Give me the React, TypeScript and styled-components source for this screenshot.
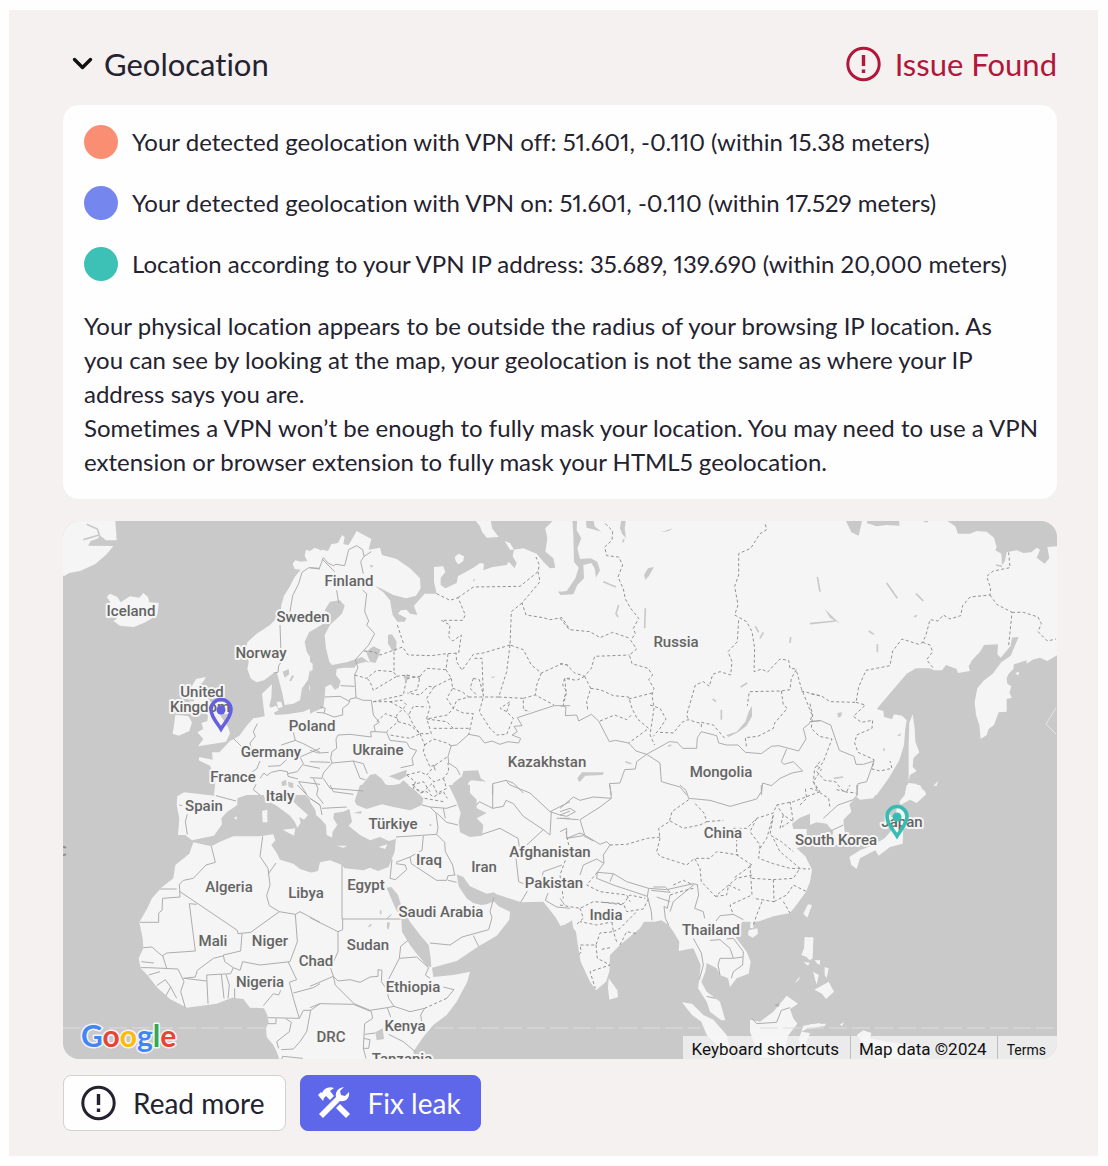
import React, { useState } from "react";
import styled, { createGlobalStyle } from "styled-components";

const GlobalStyle = createGlobalStyle`
  *, *::before, *::after { box-sizing: border-box; }
  body {
    margin: 0;
    background: #fefefe;
    color: #24222f;
    font-family: Lato, "Noto Sans", sans-serif;
    font-variant-ligatures: none;
    font-variant-numeric: proportional-nums;
  }
  h2, p, ul { margin: 0; padding: 0; font-weight: 400; }
`;

const Page = styled.main`
  padding: 10px 10px 10px 9px;
`;

const Panel = styled.section`
  display: flex;
  flex-direction: column;
  padding: 34px 41px 25px 54px;
  background: #f4f1f0;
`;

const Header = styled.header`
  display: flex;
  align-items: center;
  justify-content: space-between;
  margin-bottom: 21px;
`;

const Title = styled.h2`
  display: flex;
`;

const Disclosure = styled.button`
  display: flex;
  align-items: center;
  gap: 11px;
  padding: 0 0 0 9px;
  border: 0;
  background: none;
  color: inherit;
  font: inherit;
  font-size: 31px;
  line-height: 40px;
  cursor: pointer;
`;

const Status = styled.div`
  display: flex;
  align-items: center;
  gap: 14px;
  color: #b3163b;
  font-size: 31px;
  line-height: 40px;
`;

const Card = styled.div`
  padding: 20px 16px 20px 21px;
  border-radius: 16px;
  background: #fefefe;
  font-size: 24px;
  line-height: 34px;
`;

const Legend = styled.ul`
  display: grid;
  gap: 27px;
  margin-bottom: 28px;
  list-style: none;
`;

const LegendItem = styled.li`
  display: flex;
  align-items: center;
  gap: 14px;
`;

const Dot = styled.span<{ $color: string }>`
  flex: none;
  width: 34px;
  height: 34px;
  border-radius: 50%;
  background: ${(p) => p.$color};
`;

const MapFrame = styled.div`
  position: relative;
  margin: 22px 0 16px;
  overflow: hidden;
  border-radius: 16px;
  background: #c9c9c9;
`;

const MapDrawing = styled.svg`
  display: block;
  width: 100%;
  height: auto;
`;

const MapLabel = styled.text`
  font-family: Roboto, sans-serif;
  font-size: 15px;
  font-weight: 500;
  fill: #646464;
  stroke: #f5f5f5;
  stroke-width: 4px;
  stroke-linejoin: round;
  paint-order: stroke;
  text-anchor: middle;
`;

const Wordmark = styled.text`
  font-family: Lato, sans-serif;
  font-size: 30px;
  font-weight: 700;
  stroke: #f5f5f5;
  stroke-width: 3px;
  stroke-linejoin: round;
  paint-order: stroke;
`;

const Attribution = styled.div`
  position: absolute;
  right: 0;
  bottom: 0;
  display: flex;
  height: 23px;
  background: rgba(245, 245, 245, 0.75);
  font-family: Roboto, sans-serif;
  color: #111;
`;

const ShortcutsButton = styled.button`
  padding: 0 11px 0 9px;
  border: 0;
  background: none;
  color: inherit;
  font: inherit;
  font-size: 17px;
  line-height: 26px;
  cursor: pointer;
`;

const MapData = styled.span`
  padding: 0 10px 0 8px;
  border-left: 1px solid #bdbdbd;
  font-size: 17px;
  line-height: 26px;
`;

const Terms = styled.a`
  padding: 0 11px 0 9px;
  border-left: 1px solid #bdbdbd;
  color: inherit;
  font-size: 14px;
  line-height: 28px;
  text-decoration: none;
`;

const Actions = styled.div`
  display: flex;
  flex-wrap: wrap;
  gap: 14px;
`;

const Action = styled.button<{ $primary?: boolean }>`
  display: flex;
  align-items: center;
  gap: 17px;
  height: 56px;
  padding: 0 ${(p) => (p.$primary ? 19 : 20)}px 0 ${(p) => (p.$primary ? 16 : 17)}px;
  border: 1px solid ${(p) => (p.$primary ? "#5e67e9" : "#d3d1d0")};
  border-radius: 8px;
  background: ${(p) => (p.$primary ? "#5e67e9" : "#fefefe")};
  color: ${(p) => (p.$primary ? "#fefefe" : "#24222f")};
  font: inherit;
  font-size: 28px;
  cursor: pointer;
`;

type Tile = { x: number; y: number; land?: string; water?: string; creek?: string; solid?: string; dashed?: string };

/* Each tile is drawn in thirds of a map unit and overlaps its neighbours slightly. */
const tiles: Tile[] = [
  {
    x: 60, y: 515,
    land: `M0 0H165L170 76H138L118 60 115 70 92 78 84 92 160 93 140 118 105 148 60 168 28 174 14 182 0 182Z
      M150 236L172 246 182 262 210 244 238 248 250 234 264 246 268 262 296 264 292 300 256 322 222 336 180 332 160 318 172 310 138 304V266L152 262 140 246Z
      M780 104L764 98 750 108 738 104 734 122 742 138 722 140 706 136 698 146 704 162 722 164 704 186 690 214 672 242 664 270 662 298 630 330 590 356 562 382 556 410 566 440 562 462 572 490 590 502 612 496 636 478 650 470 658 500 666 530 674 570 700 566 720 556 726 520 744 494 750 462 760 440 740 410 734 380 748 350 780 330Z
      M614 604L606 536 636 508 634 548 628 572 646 600 680 598 730 590 748 582 780 600V840H462L466 800 458 770 450 752 416 736 418 726 458 734 456 712 478 712 510 678 538 662 560 632 580 610Z
      M628 580l20-8 8 14-16 8ZM650 560h14l4 16-14 4ZM748 512l12-4-2 14-10 4Z
      M408 492L438 486 430 500 412 514 440 516 434 540 460 570 480 600 504 636 510 655 498 680 462 686 414 694 430 672 412 652 430 642 424 624 442 618 444 600 420 586 400 570 384 556 392 520Z
      M346 600L384 602 396 622 388 648 356 662 338 656 342 630Z`,
    water: `M668 470l18-8 2 16-14 10ZM688 498l8-18 6 4-8 14ZM664 800l14-6 2 16-14 4ZM684 800l16 4v16l-14-4Z`,
    creek: `M80 28L112 42 118 60 70 74M380 556h22M374 600h20`,
    solid: `M780 162L746 158 726 172 716 206 698 242 690 290M660 330L664 440 656 452 654 472 640 474M592 626L580 650 586 664 570 684 574 702M520 670L530 680 544 694M700 652L706 676 664 690M706 676L730 686 780 712M600 738L590 762 577 770M600 790L612 774 620 782 634 772 660 766 682 770 684 784 714 792M624 754L660 752 680 734M684 776L712 770 730 746 720 726 780 700M730 750L780 760M716 800L780 808M716 800L740 838M588 808L580 824 600 840`,
  },
  {
    x: 310, y: 515,
    land: `M0 108L20 112 36 104 54 108 64 88 84 84 96 60 104 66 100 88 116 90 140 48 184 72 176 104 210 98 216 120 260 132 300 160 330 190 332 220 318 242 288 250 250 240 212 220 196 214 220 232 240 256 248 300 262 320 284 320 290 310 264 296 272 286 290 284 300 296 322 300 312 272 344 236 380 236 372 200V156L400 154 406 172 392 188V210L406 220 440 204 444 184 490 158 510 144 522 146 520 166 548 156 590 150 596 140 614 160 620 144 608 124 612 104 640 100 680 116 700 140 720 160 736 158 730 130 706 110 712 70 706 40 728 18V0H780V840H0Z
      M484 0H540L546 40 566 66 530 68 516 50 510 34Z M584 78L600 84 612 104 600 104Z M434 126L446 116 462 124 460 138 446 148 438 140Z`,
    water: `M0 350L44 324 60 300 44 286 60 260 90 256 104 272 96 296 60 330 44 360 48 400 58 440 66 450 110 442 156 426 180 444 168 440 140 448 134 458 100 458 80 462 78 480 92 498 86 518 74 524 62 508 46 516 44 546 40 578 12 590 0 596V470L8 464 8 446 0 440Z
      M168 410L190 394 212 404 206 424 196 444 180 440Z M234 360L246 358 260 380 258 408 248 408 234 386Z
      M150 840L156 810 180 780 196 776 216 792 226 808 240 812 270 806 280 796 300 812V840Z M236 784L290 764 288 784 268 796Z
      M416 840L430 804 456 784 460 768 504 766 512 790 528 800 484 796 474 804 480 840Z M744 230L780 222V240L752 240Z M178 150l14 2-8 6ZM488 196l8-6-4 10ZM542 486l14-2-6 6ZM280 482l14-4 4 14-12 6Z`,
    solid: `M0 158L28 160 40 128 54 144 70 152 78 148 104 152 116 104 140 92 158 104 162 124 152 140 160 176M162 124L184 110M36 132L74 170M158 226L170 236 164 290 176 318 170 330 194 356 176 390 136 434M80 226L86 264M136 434L144 458 134 480 138 548 120 552 116 566 98 580V600L72 606 42 594 20 592M92 512L134 514M44 546L90 544 120 560M30 576L46 580 42 594M138 548L160 556 184 556 190 600 208 622 192 632 196 650 182 650 184 666 120 658 84 660 78 672 80 700 66 710 62 730 66 744 130 738 160 746 172 776M196 650L230 652 240 676 290 682 300 700 320 706 306 730 310 750 272 758M0 706L26 714 56 712M0 740L60 742M66 744L40 774 36 790 0 788M40 790L60 820 160 828M130 738L150 790 166 794M10 790L24 820 20 840M450 780L440 760 416 744 414 724 424 692 440 690 476 658 508 664 524 684 546 678 570 688 594 680 626 684 632 670 606 660 622 650 612 634 636 632 622 608 732 572 780 572M548 840V806L588 796 610 804 640 834 M590 800L600 810`,
    dashed: `M380 236L420 256 444 248 466 300 458 316 394 316 420 330 416 366 428 378 454 360 446 414 410 416 364 422 294 420 278 396 210 420 190 410 160 408M444 248L490 216 630 214 684 170 688 150 678 126M684 170L690 200 636 264 648 300 700 308 720 314 756 308 780 344M636 264L604 290 600 390 640 404 664 450 694 474 756 446 780 452M600 390L520 414 490 418 456 466 440 440 438 414M694 474L680 510 676 540 732 570M600 390L590 470 566 546 520 546 516 430 490 430M262 330L282 390M252 410V468M134 480L170 490 200 466 250 470 260 484 190 526 180 500 168 486M190 560L280 540 290 490 330 484 322 524 292 534M330 484L350 460 408 464 414 416M408 464L424 490 372 516 356 514 330 540 292 534M260 484L290 480 330 490M372 516L350 550 360 576 350 610 364 656 330 656 310 630 296 600 310 574 350 576M424 490L428 520 410 550 430 580 412 600 350 612M428 520L456 530 476 546 440 556 430 580 460 594 490 596 476 660M476 546L520 546 508 590 540 640 560 660 590 658 610 610 590 590 600 560 570 580 590 590M566 546L640 550 640 584 660 590M640 550L676 540M430 640L410 620 350 612M476 640L430 640 364 640M190 560L240 560 276 556 290 570 260 600 264 620 230 650M200 620L226 596 264 610M240 560L276 580 296 600M264 620L300 630 330 656 300 670 240 660M330 656L344 690 340 710 360 756 372 750 376 770M344 690L370 672 410 684 424 692M376 750L414 724M376 750L350 780 372 800 400 790 416 770 414 744M290 780L330 770 350 780M290 780L316 800 310 820 340 830 372 800M400 790L410 820 380 836M306 810L340 800 360 830M490 490L508 494 520 540M490 490L480 520 500 540M780 490L764 490 768 530 760 560`,
  },
  {
    x: 560, y: 515,
    land: `M0 0H780V840H0Z`,
    water: `M36 0H52L50 46 64 70 52 100 60 132 92 130 112 140 120 166 108 188 104 160 94 144 70 150 72 190 52 210 40 238 0 240V230L20 228 46 190 56 158 42 140 40 60Z M76 0H98L104 34 124 50 96 42 80 38ZM186 0H200L194 40 198 70 186 56 180 40Z M302 52L338 40 326 48ZM252 180L264 160 282 156 266 184 256 194Z M498 660L530 650 556 620 566 590 576 572V604L560 632 534 652 506 666Z M52 790L66 772 132 772 128 780 76 782 58 802Z`,
    creek: `M256 280L254 340M176 270L168 296 174 306M130 200L168 216M484 584V614M692 366L690 384M750 328L780 320M774 190L780 230M586 334L596 352M600 370L610 352M458 552l10 8M542 516L562 504M196 740L214 746M188 82l4-10M324 694l10-4`,
    solid: `M0 572L18 576 16 602 50 600 56 618 94 598 116 618 148 680 166 676 206 684 228 708 260 718 328 680 352 682 368 700 410 700 412 668 424 650 470 662 476 684 500 690 534 690 556 712 604 716 634 694 656 692 716 708 738 672 730 640 748 626 750 620 780 618M680 702L664 740 672 748 700 740 728 768 696 774 660 790 634 812 608 804 604 840M260 718L300 744 304 800 360 816 380 840M260 718L230 740 226 762 194 764 180 804 148 806 154 840`,
    dashed: `M136 26L158 48 156 76 134 96 140 122 176 126 188 150 174 186 190 222 196 252 212 280 236 310 220 340 226 356 212 376 230 402 208 420 216 446 264 460 278 480 266 494 282 520 276 540 282 580 270 660 284 690M0 310L28 344 90 350 120 368 158 352 210 370M0 446L20 450 44 474 74 484 94 460 104 424 208 420M74 484L50 496 14 490 8 510 20 530 10 570M74 484L92 520 80 560 84 590M92 520L120 524 160 542 206 546 216 580 232 612 266 640 206 684M206 552L276 534M120 618L164 600 200 614 216 598M270 570L300 580 318 612 300 640 280 664M300 652L340 654 366 622 384 614 424 626V640M384 610L380 600 406 510 430 500 448 514 458 478 480 470 512 480 516 440 504 410 532 380 536 314M616 28L620 44 600 56 572 100 536 116V180L524 214 534 270 524 300 560 320 576 350 584 400 582 470 606 462 622 472 660 432 686 436 690 460 710 462 694 490 690 524 664 528 568 530 562 572M664 528L670 570 682 580 644 624 640 640 594 664 556 668 560 700M424 622L460 630 496 672M710 470L724 520 740 560 756 600 750 620M724 528L780 542M780 740L764 760 760 800 780 830`,
  },
  {
    x: 810, y: 515,
    land: `M0 0H412V18L436 34 444 56 480 56 500 48 530 50 552 68 560 96 556 106 574 116 576 150 584 140 590 112 620 106 640 114 664 112 680 98 690 104 680 128 704 146 718 130 712 96 760 92V410L712 438 690 428 668 434 650 446V436L612 448 610 462 596 476 590 490 592 506 604 514 598 534 606 548 590 552V590L566 592 552 630 536 642 530 660 512 672 508 630 498 600 494 560 502 520 520 498 548 476 574 442 602 422 626 366 606 368 602 392 572 428 562 418 564 388 522 390 510 410 486 436 476 454 480 468 444 474 440 462 408 450 396 466H372L358 460H318L290 476 200 582 220 588 222 606 246 612 252 598 276 602 290 616 286 640 282 690 268 736 236 790 200 840H0Z
      M308 598L314 640 316 680 328 712 310 730 308 756 320 768 300 780 296 800V690L298 624Z M290 840L294 804 318 806 346 830 348 840Z M370 812L384 798 380 812ZM616 474l12-4-4 12Z`,
    water: `M108 0H156L156 18 146 62 124 52 108 18Z M170 24L180 0H268V32L230 30 200 34ZM342 14h12v8h-12Z M44 282L90 326 60 308ZM310 304l12-6-4 10ZM82 594l14-2-2 12-10 4ZM260 664l12-10v8Z M230 578l10 2-4 12Z`,
    creek: `M22 186L30 230M0 326L76 318M230 204L262 250M318 236L340 258M176 348L192 358M202 388V412M72 790L100 786M222 700v8M558 150l18 4`,
    solid: `M0 620L30 616 62 630 88 706 132 724 138 748H160L192 738 170 800 144 806 140 840`,
    dashed: `M596 112L600 158 550 168 530 184 542 220 540 240 480 246 458 272 452 302 420 312 400 300 384 318 360 314 348 360 338 382 326 388 276 372 248 408 240 452 168 466 146 516 138 562 60 560 36 544 0 536M540 240L560 268 606 292 596 392M606 292L640 292 684 306 694 326 684 350 712 378 738 372M338 382L360 390 368 410 350 434 370 460M138 562L166 570 130 604 154 622 188 616 186 640 140 660 134 684 144 712 192 734 186 762 210 768 246 760 240 738M0 566L8 600 4 640 28 664 66 672 40 740 20 770 44 796 76 800 100 830 138 834M20 750L34 764 10 800 24 830`,
  },
  {
    x: 60, y: 785,
    land: `M400 172L420 176 454 184 480 170 520 154H600L640 148 646 166 634 180 650 204 660 224 700 236 720 252 764 266 780 262V840H664L650 800 640 780 620 756 618 730 626 712 622 690 612 670 570 668 550 642 516 638 470 656 380 668 330 642 290 606 262 570 242 550 236 520 250 490 248 460 238 412 262 370 276 340 304 308 340 280 346 240 388 206Z
      M352 34L372 22 464 32 470 0H596L612 18 560 30 532 40V60L500 82 484 100 486 118 462 152 424 160 396 166 376 150H354L358 100 350 60Z
      M590 0H660L668 16 706 56 744 90 732 104 718 96 722 114 712 128 704 110 690 92 650 62 616 44 606 16Z M668 134L706 130 702 152ZM606 78L622 74V112H608ZM522 98l8-4v12ZM668 0H780V100L768 90 766 60 730 24 700 0Z`,
    creek: `M300 312H350`,
    solid: `M454 184L466 232 438 240 400 280 370 286 358 298 360 336 308 340 306 376 296 384V412H240M360 320L532 436 534 446 572 442 658 380 628 362 620 332 630 300 624 250 600 214 608 154M624 268L648 234M410 358L388 356 406 498 320 504 308 512 320 550M546 446L542 498 490 510 494 530 520 548 512 566 440 570 444 656M492 512L460 520 412 556 406 576 370 580M250 488L276 486 296 504 310 514M242 548L266 548 354 552 372 590 362 620 376 668M244 530L282 534M266 570L300 560M290 602L316 584 332 606 318 632M332 606L350 640M484 568L492 640M498 568L508 600 504 640M524 640V610M520 548L540 556 548 530 600 540 690 530 712 470 706 388 658 380M706 388L720 380 780 412M684 530L710 584 688 592 700 640 718 700 624 698M610 662L640 626 656 630 662 616M700 624L760 608 780 596M718 700L730 676H752L740 740 720 770 700 792 664 794M752 676L780 656M676 700L694 712 688 740 650 770 656 790M624 716H648V700M372 580L440 588M664 826L668 814 728 820M468 32L528 48M382 88L376 110 382 148M358 60L366 62M712 0L750 40 780 60`,
  },
  {
    x: 310, y: 785,
    land: `M0 264L24 258 30 232 60 226 96 240 104 250 160 256 180 248 204 258 236 246 254 200 258 162 236 168 210 156 180 166 150 150 116 122 126 110 118 72 100 80 72 84 70 100 82 120 68 140 66 158 50 150 48 120 30 100 14 72 0 50V0H780V410L752 424 736 396 700 350 634 352 560 328 550 348 566 364 600 380 598 404 560 452 506 484 440 528 366 548 370 576 430 570 480 560 472 590 440 650 410 690 370 720 340 756 330 770 310 800 316 840H0Z M206 186L232 178 226 192ZM80 182H112L100 188Z`,
    water: `M150 0H294L320 20 340 40 336 60 300 76 250 66 216 58 170 72 140 60 134 48Z M416 0H480L480 24 500 44V70L530 84 500 100 520 120 516 152 480 156 450 142 446 110 452 84 440 50Z
      M230 308L244 306 264 330 276 370 300 410 330 450 356 480 362 520 364 546 352 544 320 506 300 480 276 440 274 400 256 370Z M440 268L460 276 480 304 530 326 552 322 562 330 550 350 530 358 514 360 490 354 470 340 446 304Z M196 742L218 730 222 762 200 766ZM130 84l24-6v8ZM232 410l8 4-4 20-6-6Z`,
    creek: `M176 426L184 418M212 388V376M358 118l6 4`,
    solid: `M96 240V402H230L244 388M230 402H272M98 402V434L84 440V500L62 550 70 574 84 588 120 584 150 592 180 576 204 574V554L216 556 214 590 230 612 236 640 252 664 232 668 180 676 132 656 76 600 70 574 0 604M0 398L84 440M0 668L30 656 130 658 184 680 188 700 164 716 160 790 168 820M164 748L196 744M160 760L180 764 176 790 160 790M236 748L280 770 316 800M232 668L242 696M252 664L300 680 344 670 332 690 336 716 344 726M294 466L272 484 268 520 232 590M268 520L320 516 356 548 346 570 360 580M400 606L432 614 410 640M258 156L380 148 384 128 378 84 360 66 336 60M340 152L336 196 300 216 258 232M404 172L406 200 428 240 434 270M380 148L404 172M300 216L304 236 380 286 410 286 414 272 436 270M246 224L240 280 256 284 290 254 286 240 258 236M360 474L420 480 456 456 536 434 546 398 540 380 552 336M490 452L506 484M414 286L440 292M516 148L570 130 624 160 630 196M618 220L626 290 640 296M632 352L652 318M548 0V70L508 50 500 60M548 70L580 64 588 46 610 56 640 94 700 134 720 150M700 134L650 180M600 0L660 24 720 80 780 50M720 150L724 80M720 80L750 90 780 78M740 100H780M380 84L410 112 444 120M360 66L410 70 440 60M400 70L406 100M700 260L756 240M700 260L696 276M714 324L706 346 740 366 780 370M0 40L30 60 36 90M36 70L110 66M60 0L70 20 130 28M20 30L40 56`,
    dashed: `M310 0L330 24 350 20 370 36 400 20 412 40M370 0L384 30M344 40L400 50M768 140L776 180M766 226L750 270 760 340M410 640L344 670`,
  },
  {
    x: 560, y: 785,
    land: `M0 0H780V84L750 86 720 98 696 116 700 132 740 132V180L710 190 736 214 756 254 750 290 738 320 712 356 690 384 640 394 600 408 580 412V430L570 428 572 410 548 410 530 430 528 458 560 500 572 530 566 566 530 580 510 606 504 580 480 570 470 550 440 534 436 560 424 590 440 620 480 650 496 706H484L450 680 440 650 414 610 418 580 422 540 400 490 356 498 358 470 340 440 326 420 304 406 284 410H252L240 430 180 480 150 510 148 560 138 590 108 616 90 590 62 530 52 470 48 440 40 430 36 406 12 420 0 416Z
      M146 580L172 616 174 636 148 644 144 610ZM566 436L592 430 594 446 578 458 564 450ZM744 358L756 360 742 398 730 386ZM734 456L760 458 758 500 748 526 740 516 724 510 732 490ZM366 652L396 656 430 690 460 704 500 750 520 840H500L470 780 440 750 424 710 396 690Z
      M570 704L600 710 640 680 680 632 714 656 690 672 700 700 712 716 684 752 670 820H600L570 740ZM730 722L780 714V726L740 732 724 740 750 744 730 800 716 764ZM704 594L720 574 716 586ZM730 530l20 4-6 8ZM760 562L776 570 770 598ZM764 614L780 606V620ZM770 534l10-8v14Z`,
    solid: `M150 0L154 40 120 66 60 104 74 150 120 178 140 170 150 180 130 210 132 234 112 262 160 266 200 290 266 310 320 314 400 296 414 300M112 262L110 280 160 300 262 334 266 310M150 290L160 266M154 40L100 36 60 46 40 36 0 70M0 80L30 70 46 80 20 94 0 90M0 100L56 104M0 140L20 130 20 160 60 144 74 150M20 160L70 152 100 168M60 270L70 240 110 222 130 234M274 316L330 322 316 306 280 306M330 330L322 370 312 364 316 400 326 420M262 334L274 380 276 406M290 336L330 350M412 300L416 330 404 370 430 380 434 400M330 380L340 350 400 300M360 0L378 16 386 40 450 46 510 64 590 42 604 20V0M468 408L480 392 520 388 550 404M400 460L424 504 430 540 418 584M450 466L480 464 510 490 520 520 480 520 474 540 480 570M500 462L520 460 550 500 548 540 520 560 514 580M520 520L548 516M440 634L466 640M0 340L14 360M576 700L590 716 650 712 664 676 690 668M646 660l10-4v8Z`,
    dashed: `M386 44L336 80 328 110 296 130 300 160 290 200 300 214 380 240 404 220 420 250 424 290 466 334 530 280 576 270M150 180L200 178 262 160 304 156M330 108L370 130 420 120 440 110 432 84 400 50M440 110L490 106M520 130L560 130 590 100 640 84 650 60 700 50 780 20M590 100L570 140 600 180 596 220 640 236 690 250 750 252M640 90L630 150 664 170 700 200M530 160V210L576 240 520 280M536 210L470 200 450 220 404 220M570 240L576 330 510 360 520 390M576 280L640 284 700 280 720 250 660 200 640 160M640 284L642 350 580 340M642 350L680 330 700 300 740 320M606 350L590 390 580 420M670 350L690 384M600 190L620 160 640 90M466 334L500 330 506 300 540 316M690 50L700 110 670 90 650 60M670 90L660 130 690 110M720 60L740 40 736 10M0 360L60 370 100 350 130 352 190 356 210 330 256 340M60 370L70 400 48 420M130 352L192 360 200 380 250 372 266 340M160 410L110 420 60 410M156 412L160 440 120 444 108 480 60 480 64 500 56 510M108 480L112 520 150 540 90 560 106 610M150 488L120 494M170 470L160 440 180 430 210 400 230 380M180 480L200 440 230 446M112 262L80 300 120 320 200 330 210 350M330 330L360 320 400 310M340 300L370 286 400 300`,
  },
  {
    x: 810, y: 785,
    land: `M0 0H216L190 40 150 44 140 36 118 58 124 80 100 104 104 140 100 180H60L70 140 50 116 20 112 0 120Z M290 0H330L346 30 320 54 300 44 272 60 268 50 284 30ZM262 60L290 90 280 130 278 176 240 186 206 212 196 196 150 220 140 252 124 240 118 216 150 196 190 180 224 160 250 130ZM0 456L10 458 8 520 0 526ZM14 526h18l-10 10ZM44 546L56 550 50 580 44 570ZM10 562L26 570 20 598ZM14 614L56 590 72 620 48 642 36 626ZM0 718L48 716 44 724 0 726ZM90 718l12-6-6 12ZM140 750L160 736 184 744 180 760 230 770 300 780 360 826H200Z`,
    solid: `M40 100L84 60 130 44 142 30 140 0M62 138L100 120`,
    dashed: `M0 10L20 16 40 30 56 40 60 70M80 14L110 20 120 0`,
  },
];

const labels: [string, number, number][] = [
  ["Iceland", 131, 616], ["Finland", 349, 586], ["Sweden", 303, 622], ["Norway", 261, 658],
  ["United", 202, 697], ["Kingdom", 200, 712], ["Poland", 312, 731], ["Germany", 271, 757],
  ["Ukraine", 378, 755], ["France", 233, 782], ["Spain", 204, 811], ["Italy", 280, 801],
  ["Türkiye", 393, 829], ["Russia", 676, 647], ["Kazakhstan", 547, 767], ["Mongolia", 721, 777],
  ["China", 723, 838], ["Japan", 902, 827], ["South Korea", 836, 845], ["Afghanistan", 550, 857],
  ["Iraq", 429, 865], ["Iran", 484, 872], ["Pakistan", 554, 888], ["Algeria", 229, 892],
  ["Libya", 306, 898], ["Egypt", 366, 890], ["Saudi Arabia", 441, 917], ["India", 606, 920],
  ["Mali", 213, 946], ["Niger", 270, 946], ["Sudan", 368, 950], ["Chad", 316, 966],
  ["Thailand", 711, 935], ["Nigeria", 260, 987], ["Ethiopia", 413, 992], ["DRC", 331, 1042],
  ["Kenya", 405, 1031], ["Tanzania", 402, 1064],
];

function Pin({ x, y, color }: { x: number; y: number; color: string }) {
  return (
    <g transform={`translate(${x} ${y})`}>
      <path d="M0-1C-3-6-10-13-10-20.500A10 10 0 0 1 10-20.500C10-13 3-6 0-1Z" fill="none" stroke={color} strokeWidth="3.600" />
      <circle cy="-20" r="4.500" fill={color} />
    </g>
  );
}

function WorldMap() {
  return (
    <MapDrawing viewBox="63 521 994 538" role="img" aria-label="Map of detected locations">
      {tiles.map((t) => (
        <g key={`${t.x}-${t.y}`} transform={`translate(${t.x} ${t.y}) scale(${1 / 3})`} strokeLinejoin="round">
          <path d={t.land} fill="#f5f5f5" />
          <path d={t.water} fill="#c9c9c9" />
          <path d={t.creek} fill="none" stroke="#c9c9c9" strokeWidth="5" />
        </g>
      ))}
      {tiles.map((t) => (
        <g key={`${t.x}-${t.y}`} transform={`translate(${t.x} ${t.y}) scale(${1 / 3})`} fill="none" strokeLinejoin="round">
          <path d={t.solid} stroke="#adadad" strokeWidth="3" />
          <path d={t.dashed} stroke="#929292" strokeWidth="3" strokeDasharray="9 7" />
        </g>
      ))}
      <path d="M1056 708L1046 724L1056 734" fill="none" stroke="#e4e4e4" />
      <path d="M63 1028H265M435 1028H700M760 1028H1057" stroke="#dedede" strokeDasharray="18 5" />
      <path d="M69 848A4 4 0 1 0 69 854" transform="translate(-3 0)" fill="none" stroke="#8f8f8f" strokeWidth="2" />
      {labels.map(([name, x, y]) => (
        <MapLabel key={name} x={x} y={y}>{name}</MapLabel>
      ))}
      <Pin x={221} y={730} color="#6560e0" />
      <Pin x={897} y={837} color="#35bdb4" />
      <Wordmark x="81" y="1047">
        <tspan fill="#4285f4">G</tspan>
        <tspan fill="#ea4335">o</tspan>
        <tspan fill="#fbbc05">o</tspan>
        <tspan fill="#4285f4">g</tspan>
        <tspan fill="#34a853">l</tspan>
        <tspan fill="#ea4335">e</tspan>
      </Wordmark>
    </MapDrawing>
  );
}

function AlertIcon() {
  return (
    <svg width="35" height="36" viewBox="0 0 35 36" fill="none" stroke="currentColor" aria-hidden="true">
      <circle cx="17.5" cy="18" r="15.7" strokeWidth="3" />
      <path d="M17.5 9v11M17.5 23.5v3.5" strokeWidth="3.4" />
    </svg>
  );
}

function ToolsIcon() {
  return (
    <svg width="34" height="34" viewBox="0 0 34 34" fill="currentColor" aria-hidden="true">
      <path d="M1 9L4 6 5 7C7 2 12 0 17 2L13 5 17 10 13 14 9 10 7 12 6 15Z" />
      <path d="M2 28L19 11C18 6 21 2 27 1L23 5 24 9 28 10 32 6C33 12 29 16 23 15L6 32Z" />
      <path d="M19 22L23 18 33 28 29 32Z" />
    </svg>
  );
}

const readings = [
  { color: "#fa8e73", text: "Your detected geolocation with VPN off: 51.601, -0.110 (within 15.38 meters)" },
  { color: "#7586ee", text: "Your detected geolocation with VPN on: 51.601, -0.110 (within 17.529 meters)" },
  { color: "#3dc1b6", text: "Location according to your VPN IP address: 35.689, 139.690 (within 20,000 meters)" },
];

export default function App() {
  const [open, setOpen] = useState(true);
  return (
    <Page>
      <GlobalStyle />
      <Panel>
        <Header>
          <Title>
            <Disclosure type="button" aria-expanded={open} onClick={() => setOpen(!open)}>
              <svg width="21" height="14" viewBox="0 0 21 14" fill="none" stroke="#111" strokeWidth="3.4" strokeLinecap="round" strokeLinejoin="round" aria-hidden="true">
                <path d="M2.5 2.5L10.5 10.5L18.5 2.5" />
              </svg>
              Geolocation
            </Disclosure>
          </Title>
          <Status>
            <AlertIcon />
            Issue Found
          </Status>
        </Header>
        {open && (
          <>
            <Card>
              <Legend>
                {readings.map((r) => (
                  <LegendItem key={r.color}>
                    <Dot $color={r.color} />
                    {r.text}
                  </LegendItem>
                ))}
              </Legend>
              <p>
                Your physical location appears to be outside the radius of your browsing IP location. As
                <br />
                you can see by looking at the map, your geolocation is not the same as where your IP
                <br />
                address says you are.
              </p>
              <p>
                Sometimes a VPN won’t be enough to fully mask your location. You may need to use a VPN
                <br />
                extension or browser extension to fully mask your HTML5 geolocation.
              </p>
            </Card>
            <MapFrame>
              <WorldMap />
              <Attribution>
                <ShortcutsButton type="button">Keyboard shortcuts</ShortcutsButton>
                <MapData>Map data ©2024</MapData>
                <Terms href="#terms">Terms</Terms>
              </Attribution>
            </MapFrame>
            <Actions>
              <Action type="button">
                <AlertIcon />
                Read more
              </Action>
              <Action type="button" $primary>
                <ToolsIcon />
                Fix leak
              </Action>
            </Actions>
          </>
        )}
      </Panel>
    </Page>
  );
}
